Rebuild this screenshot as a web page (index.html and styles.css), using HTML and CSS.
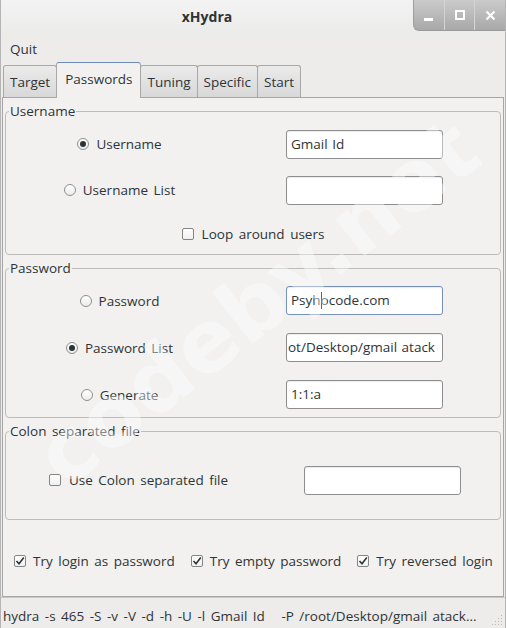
FILE: index.html
```html
<!DOCTYPE html>
<html>
<head>
	<title>xHydra</title>
	<link rel="stylesheet" href="styles.css">
</head>
<body>
	<div class="window">
		<div class="titlebar">
			<div class="title">xHydra</div>
			<div class="wm-buttons">
				<div class="wm-btn"><span class="wm-min"></span></div>
				<div class="wm-btn"><span class="wm-max"></span></div>
				<div class="wm-btn">
					<svg width="11" height="11" viewBox="0 0 11 11"><path d="M1.5 1.5 L9.5 9.5 M9.5 1.5 L1.5 9.5" stroke="#fff" stroke-width="2.2"/></svg>
				</div>
			</div>
		</div>

		<div class="menubar"><span>Quit</span></div>

		<div class="tabs">
			<div class="tab">Target</div>
			<div class="tab active">Passwords</div>
			<div class="tab">Tuning</div>
			<div class="tab">Specific</div>
			<div class="tab">Start</div>
		</div>

		<div class="notebook">
			<fieldset class="frame frame-user">
				<legend>Username</legend>
				<div class="row">
					<label class="opt"><span class="radio checked"></span>Username</label>
					<div class="entry">Gmail Id</div>
				</div>
				<div class="row">
					<label class="opt"><span class="radio"></span>Username List</label>
					<div class="entry"></div>
				</div>
				<div class="row row-wide">
					<label class="opt"><span class="check"></span>Loop around users</label>
				</div>
			</fieldset>

			<fieldset class="frame frame-pass">
				<legend>Password</legend>
				<div class="row">
					<label class="opt"><span class="radio"></span>Password</label>
					<div class="entry focus">Psyh<span class="caret"></span>ocode.com</div>
				</div>
				<div class="row">
					<label class="opt"><span class="radio checked"></span>Password List</label>
					<div class="entry scrolled">ot/Desktop/gmail atack</div>
				</div>
				<div class="row">
					<label class="opt"><span class="radio"></span>Generate</label>
					<div class="entry">1:1:a</div>
				</div>
			</fieldset>

			<fieldset class="frame frame-colon">
				<legend>Colon separated file</legend>
				<div class="row colon-row">
					<label class="opt"><span class="check"></span>Use Colon separated file</label>
					<div class="entry"></div>
				</div>
			</fieldset>

			<div class="tries">
				<label class="opt"><span class="check on"><svg width="10" height="10" viewBox="0 0 10 10"><path d="M1.5 5 L4 7.8 L8.8 1.5" fill="none" stroke="#2e3436" stroke-width="1.6"/></svg></span>Try login as password</label>
				<label class="opt"><span class="check on"><svg width="10" height="10" viewBox="0 0 10 10"><path d="M1.5 5 L4 7.8 L8.8 1.5" fill="none" stroke="#2e3436" stroke-width="1.6"/></svg></span>Try empty password</label>
				<label class="opt"><span class="check on"><svg width="10" height="10" viewBox="0 0 10 10"><path d="M1.5 5 L4 7.8 L8.8 1.5" fill="none" stroke="#2e3436" stroke-width="1.6"/></svg></span>Try reversed login</label>
			</div>
		</div>

		<div class="statusbar">
			<span class="status-text">hydra -s 465 -S -v -V -d -h -U -l Gmail Id   -P /root/Desktop/gmail atack...</span>
			<svg class="grip" width="12" height="12" viewBox="0 0 12 12">
				<g fill="#b9b9b9">
					<rect x="10" y="2" width="1" height="1"/>
					<rect x="7" y="5" width="1" height="1"/><rect x="10" y="5" width="1" height="1"/>
					<rect x="4" y="8" width="1" height="1"/><rect x="7" y="8" width="1" height="1"/><rect x="10" y="8" width="1" height="1"/>
					<rect x="1" y="11" width="1" height="1"/><rect x="4" y="11" width="1" height="1"/><rect x="7" y="11" width="1" height="1"/><rect x="10" y="11" width="1" height="1"/>
				</g>
			</svg>
		</div>

		<div class="watermark">codeby.net</div>
	</div>
</body>
</html>
```

FILE: styles.css
```css
body {
	margin: 0;
	padding: 0;
	background: #edeceb;
	font-family: "Open Sans", "DejaVu Sans", sans-serif;
	font-size: 13.5px;
	word-spacing: 2px;
	color: #2e3436;
}

.window {
	position: relative;
	width: 506px;
	height: 628px;
	overflow: hidden;
	background: #edeceb;
	box-sizing: border-box;
	border-left: 1px solid #b4b4b4;
	border-right: 1px solid #b4b4b4;
}

.titlebar {
	display: flex;
	height: 36px;
	background: linear-gradient(#f3f3f3, #ebebea);
}

.title {
	flex: 1;
	text-align: center;
	line-height: 34px;
	font-weight: bold;
	font-size: 14px;
}

.wm-buttons {
	display: flex;
	width: 91px;
	height: 30px;
	background: linear-gradient(#cbcbcb, #a8a8a8);
	border-bottom-left-radius: 6px;
	border-bottom: 1px solid #9a9a9a;
	border-left: 1px solid #9f9f9f;
}

.wm-btn {
	flex: 1;
	display: flex;
	align-items: center;
	justify-content: center;
	border-left: 1px solid #d4d4d4;
}

.wm-btn:first-child {
	border-left: none;
}

.wm-min {
	width: 9px;
	height: 3px;
	background: #fff;
	margin-top: 8px;
}

.wm-max {
	width: 6px;
	height: 6px;
	border: 2px solid #fff;
}

.menubar {
	height: 27px;
	line-height: 27px;
	padding-left: 9px;
}

.tabs {
	display: flex;
	align-items: flex-end;
	height: 34px;
	padding-left: 2px;
	position: relative;
	z-index: 1;
}

.tab {
	height: 31px;
	line-height: 33px;
	padding: 0 6px;
	border: 1px solid #a8a8a8;
	border-bottom: none;
	border-radius: 3px 3px 0 0;
	background: linear-gradient(#ebebeb, #d8d8d8);
	margin-right: -1px;
}

.tab.active {
	height: 35px;
	line-height: 33px;
	padding: 0 8px;
	background: #f2f1f0;
	border-top: 1px solid #6d89b5;
	margin-bottom: -1px;
	position: relative;
	z-index: 2;
}

.notebook {
	margin: 0 1px;
	height: 500px;
	box-sizing: border-box;
	border: 1px solid #a6a6a6;
	background: #f2f1f0;
	padding: 0 2px;
}

.frame {
	margin: 0;
	padding: 0;
	border: 1px solid #bdbcbb;
	border-radius: 4px;
	min-width: 0;
}

.frame legend {
	padding: 0 1px;
	margin-left: 3px;
	line-height: 18px;
}

.frame-user {
	margin-top: 4px;
	height: 153px;
	box-sizing: border-box;
	padding-top: 1px;
}

.frame-pass {
	margin-top: 4px;
	height: 159px;
	box-sizing: border-box;
	padding-top: 0;
}

.frame-colon {
	margin-top: 4px;
	height: 98px;
	box-sizing: border-box;
}

.row {
	display: grid;
	grid-template-columns: 227px 160px;
	column-gap: 53px;
	align-items: center;
	height: 46px;
}

.frame-pass .row {
	height: 47px;
}

.row-wide {
	grid-template-columns: 1fr;
	height: 42px;
}

.row-wide .opt {
	justify-self: center;
}

.colon-row {
	grid-template-columns: 265px 160px;
	column-gap: 33px;
	height: 80px;
}

.opt {
	display: flex;
	align-items: center;
	justify-self: center;
	white-space: nowrap;
}

.radio {
	width: 10px;
	height: 10px;
	border: 1px solid #8f8f8f;
	border-radius: 50%;
	background: linear-gradient(#ffffff, #ececec);
	margin-right: 7px;
	display: flex;
	align-items: center;
	justify-content: center;
}

.radio.checked::after {
	content: "";
	width: 6px;
	height: 6px;
	border-radius: 50%;
	background: #2e3436;
}

.check {
	width: 10px;
	height: 10px;
	border: 1px solid #858585;
	border-radius: 2px;
	background: linear-gradient(#ffffff, #f0f0f0);
	margin-right: 8px;
	display: flex;
	align-items: center;
	justify-content: center;
}

.entry {
	width: 157px;
	height: 29px;
	box-sizing: border-box;
	border: 1px solid #8e8e8e;
	border-radius: 3px;
	background: #fff;
	line-height: 27px;
	padding-left: 4px;
	white-space: nowrap;
	overflow: hidden;
	word-spacing: 1px;
	box-shadow: inset 0 1px 1px rgba(0, 0, 0, 0.08);
}

.entry.focus {
	border-color: #7590bb;
}

.entry.scrolled {
	padding-left: 1px;
}

.caret {
	display: inline-block;
	width: 1px;
	height: 17px;
	background: #000;
	vertical-align: -4px;
	margin: 0 -1px 0 0;
}

.tries {
	display: flex;
	align-items: center;
	height: 78px;
	padding-left: 9px;
	padding-top: 3px;
	box-sizing: border-box;
	gap: 16px;
}

.tries .check {
	margin-right: 7px;
}

.statusbar {
	display: flex;
	align-items: center;
	justify-content: space-between;
	height: 29px;
	padding: 0 2px 0 2px;
	border-top: 1px solid #c9c9c9;
}

.status-text {
	white-space: pre;
	padding-top: 6px;
}

.grip {
	align-self: flex-end;
	margin-bottom: 2px;
}

.watermark {
	position: absolute;
	left: 256px;
	top: 302px;
	transform: translate(-50%, -50%) rotate(-38deg);
	font-family: "DejaVu Sans", sans-serif;
	font-weight: bold;
	font-size: 86px;
	word-spacing: 0;
	color: rgba(255, 255, 255, 0.4);
	white-space: nowrap;
	pointer-events: none;
}
```
